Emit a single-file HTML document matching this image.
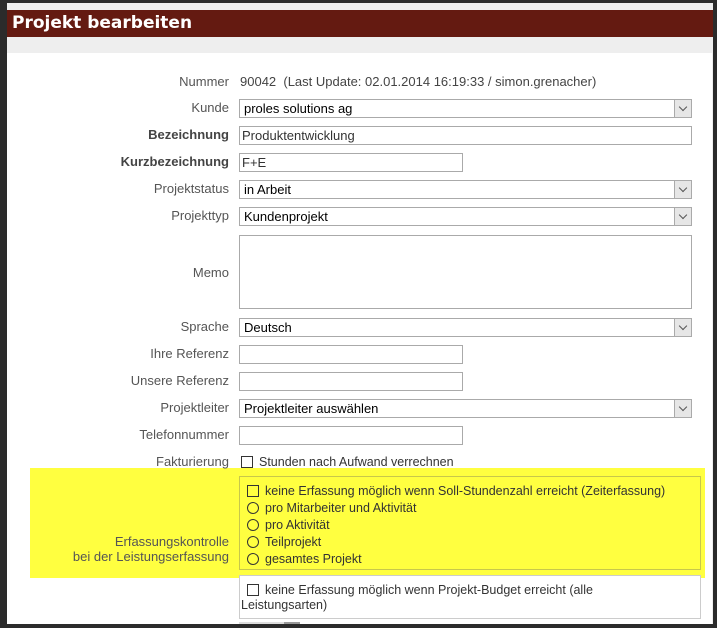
<!DOCTYPE html>
<html><head><meta charset="utf-8"><style>
*{box-sizing:border-box;margin:0;padding:0}
body{width:717px;height:628px;background:#2b2b2b;position:relative;overflow:hidden;font-family:"Liberation Sans",sans-serif;font-size:13px;color:#555}
.a{position:absolute}
#bg{left:7px;top:3px;width:706px;height:621px;background:#eeeeee}
#hd{left:7px;top:10px;width:706px;height:27px;background:#641a11;color:#fff;font-weight:bold;font-size:17px;font-family:"DejaVu Sans",sans-serif;padding:3px 0 0 5px}
#wp{left:7px;top:53px;width:705px;height:571px;background:#fff}
.l{position:absolute;right:488px;text-align:right;white-space:nowrap;line-height:14px}
.b{font-weight:bold;color:#444}
.in{position:absolute;left:239px;height:19px;border:1px solid #aaa;background:#fff;color:#000;padding:2px 4px;line-height:13px;white-space:nowrap}
.sel{width:453px}
.sel::after{content:"";position:absolute;right:0;top:0;width:16px;height:17px;background:#e6e6e6;border-left:1px solid #aaa}
.ar{position:absolute;right:5px;top:4px;width:6px;height:6px;border-right:1px solid #555;border-bottom:1px solid #555;transform:rotate(45deg);z-index:2}
.cb{display:inline-block;width:12px;height:12px;border:1px solid #333;vertical-align:-2px;margin-right:6px}
.rb{display:inline-block;width:12px;height:12px;border:1px solid #333;border-radius:50%;vertical-align:-2px;margin-right:6px}
.t{position:absolute;color:#333;white-space:nowrap;line-height:17px;font-size:12.5px}
</style></head><body>
<div class="a" id="bg"></div>
<div class="a" id="hd">Projekt bearbeiten</div>
<div class="a" id="wp"></div>
<div class="a" style="left:30px;top:468px;width:675px;height:110px;background:#ffff40"></div>

<div class="l" style="top:75px">Nummer</div>
<div class="t" style="left:240px;top:73px;color:#444;font-size:13px">90042&nbsp; (Last Update: 02.01.2014 16:19:33 / simon.grenacher)</div>

<div class="l" style="top:101px">Kunde</div>
<div class="in sel" style="top:99px">proles solutions ag<span class="ar"></span></div>
<div class="l b" style="top:128px">Bezeichnung</div>
<div class="in" style="top:126px;width:453px;color:#333;padding-left:2px">Produktentwicklung</div>
<div class="l b" style="top:155px">Kurzbezeichnung</div>
<div class="in" style="top:153px;width:224px;color:#333;padding-left:2px">F+E</div>
<div class="l" style="top:182px">Projektstatus</div>
<div class="in sel" style="top:180px">in Arbeit<span class="ar"></span></div>
<div class="l" style="top:209px">Projekttyp</div>
<div class="in sel" style="top:207px">Kundenprojekt<span class="ar"></span></div>
<div class="l" style="top:266px">Memo</div>
<div class="in" style="top:235px;width:453px;height:74px"></div>
<div class="l" style="top:320px">Sprache</div>
<div class="in sel" style="top:318px">Deutsch<span class="ar"></span></div>
<div class="l" style="top:347px">Ihre Referenz</div>
<div class="in" style="top:345px;width:224px"></div>
<div class="l" style="top:374px">Unsere Referenz</div>
<div class="in" style="top:372px;width:224px"></div>
<div class="l" style="top:401px">Projektleiter</div>
<div class="in sel" style="top:399px">Projektleiter auswählen<span class="ar"></span></div>
<div class="l" style="top:428px">Telefonnummer</div>
<div class="in" style="top:426px;width:224px"></div>
<div class="l" style="top:455px">Fakturierung</div>
<div class="t" style="left:241px;top:454px"><span class="cb"></span>Stunden nach Aufwand verrechnen</div>

<div class="a" style="left:239px;top:476px;width:462px;height:94px;border:1px solid #c8c84a"></div>
<div class="l" style="top:534px;line-height:15px">Erfassungskontrolle<br>bei der Leistungserfassung</div>
<div class="t" style="left:247px;top:483px"><span class="cb"></span>keine Erfassung möglich wenn Soll-Stundenzahl erreicht (Zeiterfassung)</div>
<div class="t" style="left:247px;top:500px"><span class="rb"></span>pro Mitarbeiter und Aktivität</div>
<div class="t" style="left:247px;top:517px"><span class="rb"></span>pro Aktivität</div>
<div class="t" style="left:247px;top:534px"><span class="rb"></span>Teilprojekt</div>
<div class="t" style="left:247px;top:551px"><span class="rb"></span>gesamtes Projekt</div>

<div class="a" style="left:239px;top:575px;width:462px;height:44px;border:1px solid #ccc;background:#fff"></div>
<div class="t" style="left:247px;top:582px"><span class="cb"></span>keine Erfassung möglich wenn Projekt-Budget erreicht (alle</div>
<div class="t" style="left:241px;top:597px">Leistungsarten)</div>
<div class="a" style="left:239px;top:622px;width:45px;height:2px;background:#ddd"></div>
<div class="a" style="left:284px;top:622px;width:16px;height:2px;background:#999"></div>
</body></html>
